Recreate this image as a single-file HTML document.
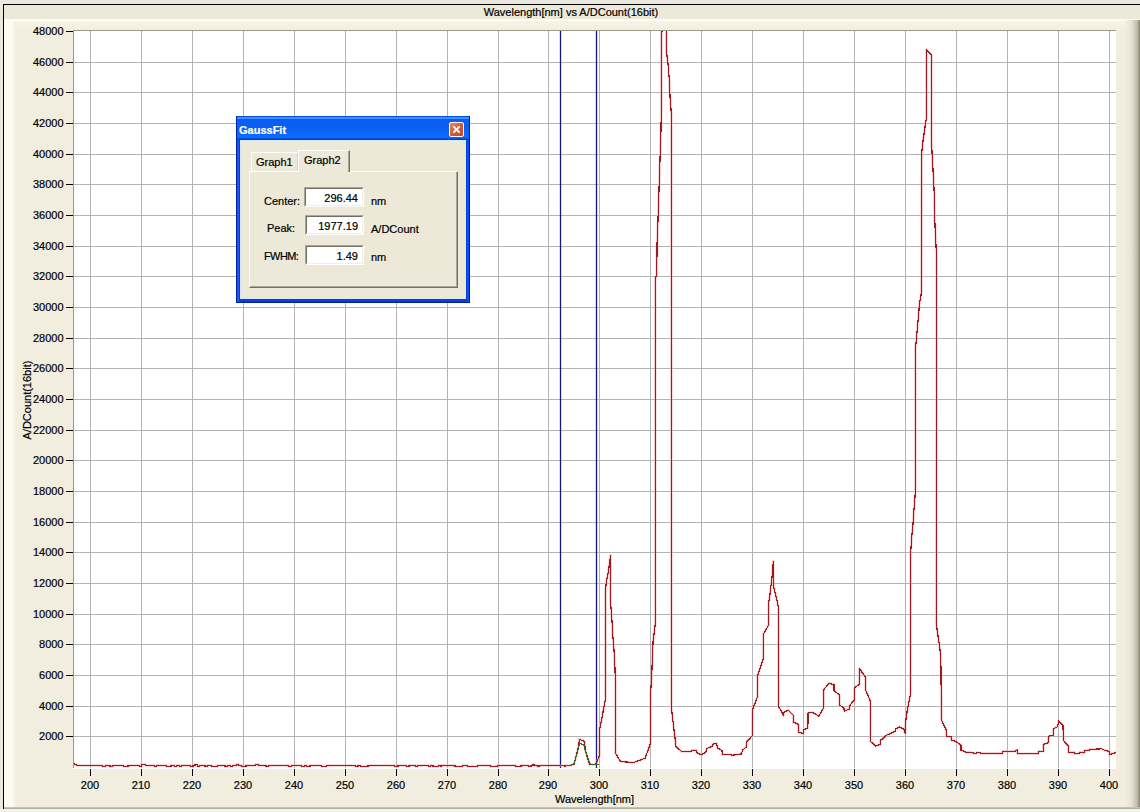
<!DOCTYPE html>
<html><head><meta charset="utf-8"><title>GaussFit</title>
<style>
html,body{margin:0;padding:0}
body{-webkit-text-stroke:0.2px currentColor;width:1140px;height:812px;overflow:hidden;position:relative;background:#EAE8DC;font-family:"Liberation Sans",sans-serif;font-size:11px;color:#000}
.a{position:absolute}
.t{position:absolute;white-space:nowrap;line-height:13px;font-size:11px}
.xl{position:absolute;top:779px;width:40px;text-align:center;line-height:13px;white-space:nowrap}
.yl{position:absolute;left:12.5px;width:51px;text-align:right;line-height:13px;white-space:nowrap}
#svg{position:absolute;left:0;top:0}
.dlg{position:absolute;left:236px;top:116px;width:234px;height:187px}
.edit{position:absolute;box-sizing:border-box;height:20px;background:#fff;border-top:1px solid #ACA899;border-left:1px solid #ACA899;border-right:1px solid #fff;border-bottom:1px solid #fff}
.edit .in{position:absolute;left:0;top:0;right:0;bottom:0;border-top:1px solid #716F64;border-left:1px solid #716F64;border-right:1px solid #F1EFE2;border-bottom:1px solid #F1EFE2}
.edit span{position:absolute;right:5px;top:4px;line-height:13px}
</style></head><body>
<!-- frame -->
<div class="a" style="left:3px;top:4px;width:1137px;height:1px;background:#000"></div>
<div class="a" style="left:3px;top:4px;width:1px;height:805px;background:#000"></div>
<div class="a" style="left:4px;top:5px;width:1136px;height:14px;background:#ECE9D8"></div>
<div class="a" style="left:4px;top:19px;width:1136px;height:2px;background:#FCFCF2"></div>
<div class="a" style="left:4px;top:21px;width:1136px;height:786px;background:#F1EEDF"></div>
<div class="a" style="left:4px;top:21px;width:12px;height:786px;background:linear-gradient(to right,#FEFEF4,#FBFAEE 70%,#F1EEDF)"></div>
<div class="a" style="left:16px;top:21px;width:1112px;height:10px;background:linear-gradient(to bottom,#F6F4E6,#F1EEDF)"></div>
<div class="a" style="left:1126px;top:20px;width:14px;height:789px;background:linear-gradient(to right,#F1EEDF,#E4E1D0 40%,#BEBBAA 80%,#858271)"></div>
<div class="a" style="left:4px;top:807px;width:1136px;height:2px;background:linear-gradient(to bottom,#CFCCBD,#A9A696)"></div>
<div class="a" style="left:0;top:809px;width:1140px;height:3px;background:#F2F1EA"></div>
<!-- plot -->
<div class="a" style="left:73px;top:30px;width:1043px;height:739px;background:#fff"></div>
<svg id="svg" width="1140" height="812" viewBox="0 0 1140 812">
<defs><clipPath id="pc"><rect x="74" y="31" width="1042" height="737"/></clipPath></defs>
<g stroke="#B3B3B3" stroke-width="1" shape-rendering="crispEdges">
<line x1="90.5" y1="31" x2="90.5" y2="768" />
<line x1="141.5" y1="31" x2="141.5" y2="768" />
<line x1="192.5" y1="31" x2="192.5" y2="768" />
<line x1="243.5" y1="31" x2="243.5" y2="768" />
<line x1="294.5" y1="31" x2="294.5" y2="768" />
<line x1="345.5" y1="31" x2="345.5" y2="768" />
<line x1="396.5" y1="31" x2="396.5" y2="768" />
<line x1="447.5" y1="31" x2="447.5" y2="768" />
<line x1="498.5" y1="31" x2="498.5" y2="768" />
<line x1="548.5" y1="31" x2="548.5" y2="768" />
<line x1="599.5" y1="31" x2="599.5" y2="768" />
<line x1="650.5" y1="31" x2="650.5" y2="768" />
<line x1="701.5" y1="31" x2="701.5" y2="768" />
<line x1="752.5" y1="31" x2="752.5" y2="768" />
<line x1="803.5" y1="31" x2="803.5" y2="768" />
<line x1="854.5" y1="31" x2="854.5" y2="768" />
<line x1="905.5" y1="31" x2="905.5" y2="768" />
<line x1="956.5" y1="31" x2="956.5" y2="768" />
<line x1="1007.5" y1="31" x2="1007.5" y2="768" />
<line x1="1058.5" y1="31" x2="1058.5" y2="768" />
<line x1="1109.5" y1="31" x2="1109.5" y2="768" />
<line x1="74" y1="736.5" x2="1116" y2="736.5" />
<line x1="74" y1="706.5" x2="1116" y2="706.5" />
<line x1="74" y1="675.5" x2="1116" y2="675.5" />
<line x1="74" y1="644.5" x2="1116" y2="644.5" />
<line x1="74" y1="614.5" x2="1116" y2="614.5" />
<line x1="74" y1="583.5" x2="1116" y2="583.5" />
<line x1="74" y1="552.5" x2="1116" y2="552.5" />
<line x1="74" y1="522.5" x2="1116" y2="522.5" />
<line x1="74" y1="491.5" x2="1116" y2="491.5" />
<line x1="74" y1="460.5" x2="1116" y2="460.5" />
<line x1="74" y1="430.5" x2="1116" y2="430.5" />
<line x1="74" y1="399.5" x2="1116" y2="399.5" />
<line x1="74" y1="368.5" x2="1116" y2="368.5" />
<line x1="74" y1="338.5" x2="1116" y2="338.5" />
<line x1="74" y1="307.5" x2="1116" y2="307.5" />
<line x1="74" y1="276.5" x2="1116" y2="276.5" />
<line x1="74" y1="246.5" x2="1116" y2="246.5" />
<line x1="74" y1="215.5" x2="1116" y2="215.5" />
<line x1="74" y1="184.5" x2="1116" y2="184.5" />
<line x1="74" y1="154.5" x2="1116" y2="154.5" />
<line x1="74" y1="123.5" x2="1116" y2="123.5" />
<line x1="74" y1="92.5" x2="1116" y2="92.5" />
<line x1="74" y1="62.5" x2="1116" y2="62.5" />
</g>
<g stroke="#9C9888" stroke-width="1" shape-rendering="crispEdges">
<line x1="73" y1="30.5" x2="1116" y2="30.5"/>
<line x1="73.5" y1="30" x2="73.5" y2="768"/>
</g>
<g stroke="#000" stroke-width="1.2" shape-rendering="crispEdges">
<line x1="90.5" y1="769" x2="90.5" y2="776" />
<line x1="141.5" y1="769" x2="141.5" y2="776" />
<line x1="192.5" y1="769" x2="192.5" y2="776" />
<line x1="243.5" y1="769" x2="243.5" y2="776" />
<line x1="294.5" y1="769" x2="294.5" y2="776" />
<line x1="345.5" y1="769" x2="345.5" y2="776" />
<line x1="396.5" y1="769" x2="396.5" y2="776" />
<line x1="447.5" y1="769" x2="447.5" y2="776" />
<line x1="498.5" y1="769" x2="498.5" y2="776" />
<line x1="548.5" y1="769" x2="548.5" y2="776" />
<line x1="599.5" y1="769" x2="599.5" y2="776" />
<line x1="650.5" y1="769" x2="650.5" y2="776" />
<line x1="701.5" y1="769" x2="701.5" y2="776" />
<line x1="752.5" y1="769" x2="752.5" y2="776" />
<line x1="803.5" y1="769" x2="803.5" y2="776" />
<line x1="854.5" y1="769" x2="854.5" y2="776" />
<line x1="905.5" y1="769" x2="905.5" y2="776" />
<line x1="956.5" y1="769" x2="956.5" y2="776" />
<line x1="1007.5" y1="769" x2="1007.5" y2="776" />
<line x1="1058.5" y1="769" x2="1058.5" y2="776" />
<line x1="1109.5" y1="769" x2="1109.5" y2="776" />
<line x1="66" y1="736.5" x2="73" y2="736.5" />
<line x1="66" y1="706.5" x2="73" y2="706.5" />
<line x1="66" y1="675.5" x2="73" y2="675.5" />
<line x1="66" y1="644.5" x2="73" y2="644.5" />
<line x1="66" y1="614.5" x2="73" y2="614.5" />
<line x1="66" y1="583.5" x2="73" y2="583.5" />
<line x1="66" y1="552.5" x2="73" y2="552.5" />
<line x1="66" y1="522.5" x2="73" y2="522.5" />
<line x1="66" y1="491.5" x2="73" y2="491.5" />
<line x1="66" y1="460.5" x2="73" y2="460.5" />
<line x1="66" y1="430.5" x2="73" y2="430.5" />
<line x1="66" y1="399.5" x2="73" y2="399.5" />
<line x1="66" y1="368.5" x2="73" y2="368.5" />
<line x1="66" y1="338.5" x2="73" y2="338.5" />
<line x1="66" y1="307.5" x2="73" y2="307.5" />
<line x1="66" y1="276.5" x2="73" y2="276.5" />
<line x1="66" y1="246.5" x2="73" y2="246.5" />
<line x1="66" y1="215.5" x2="73" y2="215.5" />
<line x1="66" y1="184.5" x2="73" y2="184.5" />
<line x1="66" y1="154.5" x2="73" y2="154.5" />
<line x1="66" y1="123.5" x2="73" y2="123.5" />
<line x1="66" y1="92.5" x2="73" y2="92.5" />
<line x1="66" y1="62.5" x2="73" y2="62.5" />
<line x1="66" y1="31.5" x2="73" y2="31.5" />
</g>
<g clip-path="url(#pc)">
<line x1="560.5" y1="31" x2="560.5" y2="768" stroke="#141482" stroke-width="1.3"/>
<line x1="596.5" y1="31" x2="596.5" y2="768" stroke="#141482" stroke-width="1.3"/>
<polyline fill="none" stroke="#F0A8A8" stroke-opacity="0.6" stroke-width="2.6" stroke-linejoin="round" points="73.5,763.5 75.5,764.5 77.9,765.5 77.9,765.5 102.6,765.5 102.6,766.5 105.8,766.5 105.8,765.5 110.0,765.5 110.0,766.5 112.6,766.5 112.6,765.5 123.2,765.5 123.2,766.5 127.9,766.5 127.9,765.5 139.5,765.5 139.5,766.5 141.6,766.5 141.6,764.5 145.8,764.5 145.8,765.5 154.2,765.5 154.2,766.5 156.8,766.5 156.8,765.5 166.3,765.5 166.3,766.5 171.0,766.5 171.0,765.5 174.2,765.5 174.2,766.5 176.3,766.5 176.3,765.5 179.5,765.5 179.5,766.5 181.6,766.5 181.6,765.5 190.3,765.5 190.3,766.5 192.9,766.5 192.9,765.5 195.0,765.5 195.0,764.5 197.6,764.5 197.6,766.5 199.7,766.5 199.7,765.5 205.0,765.5 205.0,766.5 207.6,766.5 207.6,765.5 211.8,765.5 211.8,766.5 217.1,766.5 217.1,765.5 225.0,765.5 225.0,766.5 227.6,766.5 227.6,765.5 230.3,765.5 230.3,766.5 232.4,766.5 232.4,765.5 236.6,765.5 236.6,764.5 238.7,764.5 238.7,765.5 241.8,765.5 241.8,766.5 246.0,766.5 246.0,765.5 255.5,765.5 255.5,764.5 258.7,764.5 258.7,765.5 266.0,765.5 266.0,766.5 268.7,766.5 268.7,765.5 288.2,765.5 288.2,766.5 291.3,766.5 291.3,765.5 301.8,765.5 301.8,766.5 304.7,766.5 304.7,765.5 306.3,765.5 306.3,766.5 310.0,766.5 310.0,765.5 321.6,765.5 321.6,766.5 326.8,766.5 326.8,765.5 355.3,765.5 355.3,766.5 357.9,766.5 357.9,765.5 360.5,765.5 360.5,766.5 367.9,766.5 367.9,765.5 394.7,765.5 394.7,766.5 397.9,766.5 397.9,765.5 406.3,765.5 406.3,766.5 409.0,766.5 409.0,765.5 415.8,765.5 415.8,766.5 417.6,766.5 417.6,765.5 428.7,765.5 428.7,766.5 430.8,766.5 430.8,765.5 432.9,765.5 432.9,766.5 438.2,766.5 438.2,765.5 440.8,765.5 440.8,766.5 441.8,766.5 441.8,765.5 455.0,765.5 455.0,766.5 462.4,766.5 462.4,765.5 467.1,765.5 467.1,766.5 477.6,766.5 477.6,765.5 490.3,765.5 490.3,766.5 497.1,766.5 497.1,765.5 515.8,765.5 515.8,766.5 521.0,766.5 521.0,765.5 528.1,765.5 528.1,766.5 530.9,766.5 530.9,765.5 533.0,765.5 533.0,764.5 534.7,764.5 534.7,765.5 537.2,765.5 537.2,766.5 539.0,766.5 539.0,765.5 564.6,765.5 564.6,766.5 565.5,766.5 565.5,765.5 569.5,765.5 570.2,765.5 574.2,764.0 578.6,746.0 579.4,739.4 584.6,741.3 585.2,750.0 589.5,764.4 595.5,764.5 599.5,755.7 599.5,730.5 605.5,699.0 605.5,589.0 606.5,581.0 608.0,574.0 609.0,567.0 610.0,560.0 610.6,555.4 610.4,600.0 612.0,621.0 612.9,636.6 614.2,653.0 615.0,669.0 615.5,685.0 615.5,753.3 620.5,761.5 633.3,762.6 645.2,758.2 650.5,743.2 650.5,693.3 651.5,680.0 653.1,641.0 655.3,623.6 655.3,277.2 656.8,276.0 657.0,245.0 658.0,220.0 659.0,190.0 660.0,160.0 661.0,130.0 661.3,110.0 661.3,35.0 664.0,20.0 666.4,20.0 666.4,51.6 668.3,66.0 669.4,81.6 670.0,96.0 671.4,115.0 671.4,708.0 676.0,746.5 681.6,751.5 691.0,751.5 692.0,750.3 696.0,750.3 696.9,752.6 701.3,754.8 705.8,752.0 706.7,748.6 712.2,746.2 713.2,744.2 716.6,743.2 717.6,748.1 722.0,750.6 722.3,754.5 729.9,754.5 732.4,755.2 741.2,754.0 742.7,750.1 746.2,747.0 747.1,741.2 752.3,735.8 752.5,709.7 757.5,696.9 757.5,676.0 763.1,659.4 763.1,634.4 768.6,625.2 768.6,603.0 769.8,595.7 771.3,583.1 772.2,575.7 773.3,561.3 773.5,586.0 775.0,592.0 776.4,597.9 778.5,607.5 778.5,706.3 782.8,713.7 783.3,716.0 783.5,712.7 788.2,710.2 793.2,715.2 793.2,722.0 798.6,724.5 798.6,732.4 803.0,733.4 804.0,729.5 807.9,728.0 808.0,713.2 812.4,712.2 818.8,716.2 823.7,707.8 823.7,689.6 829.1,683.2 834.0,684.6 834.0,690.5 839.5,695.0 839.5,704.8 843.9,708.3 844.4,711.0 849.4,709.0 849.5,706.0 854.3,699.8 854.3,688.0 859.2,684.6 859.2,668.3 865.6,677.2 865.6,690.0 870.5,701.3 870.4,741.4 875.8,746.1 880.2,744.3 880.2,740.4 884.6,737.4 886.0,735.5 890.5,733.5 895.0,731.5 896.0,728.6 899.4,727.1 903.8,729.0 905.3,733.5 905.4,723.6 907.3,709.9 909.3,700.0 910.5,694.0 910.7,552.4 911.6,538.6 912.9,525.6 914.0,509.0 915.3,493.3 915.3,347.4 916.2,342.0 917.5,326.0 918.6,315.0 919.4,304.0 921.4,292.9 921.8,152.5 922.7,143.3 924.9,127.6 926.4,118.2 926.4,49.4 931.5,55.3 931.4,141.4 932.9,167.3 934.2,193.1 934.7,219.0 936.0,245.8 936.6,255.0 936.6,405.0 936.2,623.5 939.3,644.8 940.8,655.8 941.5,719.9 946.3,730.2 946.3,736.2 951.2,737.0 951.2,740.1 956.1,741.6 961.0,745.0 961.0,750.1 966.5,752.4 971.4,752.4 975.3,753.4 977.8,752.4 982.2,753.4 1002.4,753.4 1002.5,751.2 1014.8,751.2 1017.2,750.2 1017.2,753.7 1038.4,753.7 1038.4,751.2 1043.3,751.2 1043.3,744.3 1048.3,742.9 1048.3,736.5 1053.2,735.0 1053.2,729.1 1057.6,726.6 1058.6,721.2 1063.0,725.1 1063.4,740.4 1068.6,746.3 1068.6,752.4 1074.5,752.4 1074.5,753.7 1079.4,753.7 1079.4,752.4 1084.6,752.4 1084.6,750.3 1089.6,750.3 1089.6,749.3 1099.4,749.0 1100.7,748.4 1104.0,750.0 1109.3,751.5 1109.5,754.6 1114.2,753.0 1116.0,752.5"/>
<polyline fill="none" shape-rendering="crispEdges" stroke="#9E1A20" stroke-width="1.2" stroke-linejoin="miter" points="73.5,763.5 75.5,764.5 77.9,765.5 77.9,765.5 102.6,765.5 102.6,766.5 105.8,766.5 105.8,765.5 110.0,765.5 110.0,766.5 112.6,766.5 112.6,765.5 123.2,765.5 123.2,766.5 127.9,766.5 127.9,765.5 139.5,765.5 139.5,766.5 141.6,766.5 141.6,764.5 145.8,764.5 145.8,765.5 154.2,765.5 154.2,766.5 156.8,766.5 156.8,765.5 166.3,765.5 166.3,766.5 171.0,766.5 171.0,765.5 174.2,765.5 174.2,766.5 176.3,766.5 176.3,765.5 179.5,765.5 179.5,766.5 181.6,766.5 181.6,765.5 190.3,765.5 190.3,766.5 192.9,766.5 192.9,765.5 195.0,765.5 195.0,764.5 197.6,764.5 197.6,766.5 199.7,766.5 199.7,765.5 205.0,765.5 205.0,766.5 207.6,766.5 207.6,765.5 211.8,765.5 211.8,766.5 217.1,766.5 217.1,765.5 225.0,765.5 225.0,766.5 227.6,766.5 227.6,765.5 230.3,765.5 230.3,766.5 232.4,766.5 232.4,765.5 236.6,765.5 236.6,764.5 238.7,764.5 238.7,765.5 241.8,765.5 241.8,766.5 246.0,766.5 246.0,765.5 255.5,765.5 255.5,764.5 258.7,764.5 258.7,765.5 266.0,765.5 266.0,766.5 268.7,766.5 268.7,765.5 288.2,765.5 288.2,766.5 291.3,766.5 291.3,765.5 301.8,765.5 301.8,766.5 304.7,766.5 304.7,765.5 306.3,765.5 306.3,766.5 310.0,766.5 310.0,765.5 321.6,765.5 321.6,766.5 326.8,766.5 326.8,765.5 355.3,765.5 355.3,766.5 357.9,766.5 357.9,765.5 360.5,765.5 360.5,766.5 367.9,766.5 367.9,765.5 394.7,765.5 394.7,766.5 397.9,766.5 397.9,765.5 406.3,765.5 406.3,766.5 409.0,766.5 409.0,765.5 415.8,765.5 415.8,766.5 417.6,766.5 417.6,765.5 428.7,765.5 428.7,766.5 430.8,766.5 430.8,765.5 432.9,765.5 432.9,766.5 438.2,766.5 438.2,765.5 440.8,765.5 440.8,766.5 441.8,766.5 441.8,765.5 455.0,765.5 455.0,766.5 462.4,766.5 462.4,765.5 467.1,765.5 467.1,766.5 477.6,766.5 477.6,765.5 490.3,765.5 490.3,766.5 497.1,766.5 497.1,765.5 515.8,765.5 515.8,766.5 521.0,766.5 521.0,765.5 528.1,765.5 528.1,766.5 530.9,766.5 530.9,765.5 533.0,765.5 533.0,764.5 534.7,764.5 534.7,765.5 537.2,765.5 537.2,766.5 539.0,766.5 539.0,765.5 564.6,765.5 564.6,766.5 565.5,766.5 565.5,765.5 569.5,765.5 570.2,765.5 574.2,764.0 578.6,746.0 579.4,739.4 584.6,741.3 585.2,750.0 589.5,764.4 595.5,764.5 599.5,755.7 599.5,730.5 605.5,699.0 605.5,589.0 606.5,581.0 608.0,574.0 609.0,567.0 610.0,560.0 610.6,555.4 610.4,600.0 612.0,621.0 612.9,636.6 614.2,653.0 615.0,669.0 615.5,685.0 615.5,753.3 620.5,761.5 633.3,762.6 645.2,758.2 650.5,743.2 650.5,693.3 651.5,680.0 653.1,641.0 655.3,623.6 655.3,277.2 656.8,276.0 657.0,245.0 658.0,220.0 659.0,190.0 660.0,160.0 661.0,130.0 661.3,110.0 661.3,35.0 664.0,20.0 666.4,20.0 666.4,51.6 668.3,66.0 669.4,81.6 670.0,96.0 671.4,115.0 671.4,708.0 676.0,746.5 681.6,751.5 691.0,751.5 692.0,750.3 696.0,750.3 696.9,752.6 701.3,754.8 705.8,752.0 706.7,748.6 712.2,746.2 713.2,744.2 716.6,743.2 717.6,748.1 722.0,750.6 722.3,754.5 729.9,754.5 732.4,755.2 741.2,754.0 742.7,750.1 746.2,747.0 747.1,741.2 752.3,735.8 752.5,709.7 757.5,696.9 757.5,676.0 763.1,659.4 763.1,634.4 768.6,625.2 768.6,603.0 769.8,595.7 771.3,583.1 772.2,575.7 773.3,561.3 773.5,586.0 775.0,592.0 776.4,597.9 778.5,607.5 778.5,706.3 782.8,713.7 783.3,716.0 783.5,712.7 788.2,710.2 793.2,715.2 793.2,722.0 798.6,724.5 798.6,732.4 803.0,733.4 804.0,729.5 807.9,728.0 808.0,713.2 812.4,712.2 818.8,716.2 823.7,707.8 823.7,689.6 829.1,683.2 834.0,684.6 834.0,690.5 839.5,695.0 839.5,704.8 843.9,708.3 844.4,711.0 849.4,709.0 849.5,706.0 854.3,699.8 854.3,688.0 859.2,684.6 859.2,668.3 865.6,677.2 865.6,690.0 870.5,701.3 870.4,741.4 875.8,746.1 880.2,744.3 880.2,740.4 884.6,737.4 886.0,735.5 890.5,733.5 895.0,731.5 896.0,728.6 899.4,727.1 903.8,729.0 905.3,733.5 905.4,723.6 907.3,709.9 909.3,700.0 910.5,694.0 910.7,552.4 911.6,538.6 912.9,525.6 914.0,509.0 915.3,493.3 915.3,347.4 916.2,342.0 917.5,326.0 918.6,315.0 919.4,304.0 921.4,292.9 921.8,152.5 922.7,143.3 924.9,127.6 926.4,118.2 926.4,49.4 931.5,55.3 931.4,141.4 932.9,167.3 934.2,193.1 934.7,219.0 936.0,245.8 936.6,255.0 936.6,405.0 936.2,623.5 939.3,644.8 940.8,655.8 941.5,719.9 946.3,730.2 946.3,736.2 951.2,737.0 951.2,740.1 956.1,741.6 961.0,745.0 961.0,750.1 966.5,752.4 971.4,752.4 975.3,753.4 977.8,752.4 982.2,753.4 1002.4,753.4 1002.5,751.2 1014.8,751.2 1017.2,750.2 1017.2,753.7 1038.4,753.7 1038.4,751.2 1043.3,751.2 1043.3,744.3 1048.3,742.9 1048.3,736.5 1053.2,735.0 1053.2,729.1 1057.6,726.6 1058.6,721.2 1063.0,725.1 1063.4,740.4 1068.6,746.3 1068.6,752.4 1074.5,752.4 1074.5,753.7 1079.4,753.7 1079.4,752.4 1084.6,752.4 1084.6,750.3 1089.6,750.3 1089.6,749.3 1099.4,749.0 1100.7,748.4 1104.0,750.0 1109.3,751.5 1109.5,754.6 1114.2,753.0 1116.0,752.5"/>
<polyline fill="none" shape-rendering="crispEdges" stroke="#2E6B22" stroke-width="1.25" points="560.5,765.3 570.0,765.6 574.0,764.0 577.5,751.5 579.7,743.1 583.7,744.8 589.0,761.9 591.0,764.5 599.0,764.5"/>
</g>
</svg>
<div class="xl" style="left:70px">200</div>
<div class="xl" style="left:121px">210</div>
<div class="xl" style="left:172px">220</div>
<div class="xl" style="left:223px">230</div>
<div class="xl" style="left:274px">240</div>
<div class="xl" style="left:325px">250</div>
<div class="xl" style="left:376px">260</div>
<div class="xl" style="left:427px">270</div>
<div class="xl" style="left:478px">280</div>
<div class="xl" style="left:528px">290</div>
<div class="xl" style="left:579px">300</div>
<div class="xl" style="left:630px">310</div>
<div class="xl" style="left:681px">320</div>
<div class="xl" style="left:732px">330</div>
<div class="xl" style="left:783px">340</div>
<div class="xl" style="left:834px">350</div>
<div class="xl" style="left:885px">360</div>
<div class="xl" style="left:936px">370</div>
<div class="xl" style="left:987px">380</div>
<div class="xl" style="left:1038px">390</div>
<div class="xl" style="left:1089px">400</div>
<div class="yl" style="top:730px">2000</div>
<div class="yl" style="top:700px">4000</div>
<div class="yl" style="top:669px">6000</div>
<div class="yl" style="top:638px">8000</div>
<div class="yl" style="top:608px">10000</div>
<div class="yl" style="top:577px">12000</div>
<div class="yl" style="top:546px">14000</div>
<div class="yl" style="top:516px">16000</div>
<div class="yl" style="top:485px">18000</div>
<div class="yl" style="top:454px">20000</div>
<div class="yl" style="top:424px">22000</div>
<div class="yl" style="top:393px">24000</div>
<div class="yl" style="top:362px">26000</div>
<div class="yl" style="top:332px">28000</div>
<div class="yl" style="top:301px">30000</div>
<div class="yl" style="top:270px">32000</div>
<div class="yl" style="top:240px">34000</div>
<div class="yl" style="top:209px">36000</div>
<div class="yl" style="top:178px">38000</div>
<div class="yl" style="top:148px">40000</div>
<div class="yl" style="top:117px">42000</div>
<div class="yl" style="top:86px">44000</div>
<div class="yl" style="top:56px">46000</div>
<div class="yl" style="top:25px">48000</div>
<div class="t" style="left:0;top:6px;width:1142px;text-align:center">Wavelength[nm] vs A/DCount(16bit)</div>
<div class="t" style="left:555px;top:793px">Wavelength[nm]</div>
<div class="t" style="left:-11px;top:395px;width:76px;text-align:center;transform:rotate(-90deg);transform-origin:50% 50%">A/DCount(16bit)</div>

<!-- dialog -->
<div class="dlg">
  <div class="a" style="left:0;top:0;width:234px;height:187px;background:#0A3ED8"></div>
  <div class="a" style="left:0;top:0;width:1px;height:187px;background:#0020A8"></div>
  <div class="a" style="left:233px;top:0;width:1px;height:187px;background:#0018A0"></div>
  <div class="a" style="left:0;top:186px;width:234px;height:1px;background:#001A90"></div>
  <div class="a" style="left:1px;top:0;width:232px;height:24px;background:linear-gradient(to bottom,#0B4FD8 0,#0B4FD8 1px,#3D8DFF 1px,#3D8DFF 3px,#0A5DF2 3px,#0A60F5 12px,#0A6CFF 20px,#0A66FA 22px,#0040C8 23px,#0040C8 24px)"></div>
  <div class="a" style="left:1px;top:24px;width:2px;height:162px;background:#1C55F2"></div>
  <div class="a" style="left:3px;top:24px;width:1px;height:162px;background:#0842C8"></div>
  <div class="a" style="left:230px;top:24px;width:1px;height:162px;background:#0842D0"></div>
  <div class="a" style="left:231px;top:24px;width:2px;height:162px;background:#0A50F4"></div>
  <div class="a" style="left:4px;top:24px;width:226px;height:159px;background:#ECE9D8;box-shadow:inset 1px 1px 0 #DCE6F6, inset -1px -1px 0 #DCE6F6"></div>
  <div class="t" style="left:3px;top:8px;color:#fff;font-weight:bold;font-size:11px">GaussFit</div>
  <!-- close -->
  <div class="a" style="left:213px;top:6px;width:15px;height:15px;box-sizing:border-box;border:1px solid #fff;border-radius:2px;background:linear-gradient(135deg,#EC8466,#D85A34 50%,#C8461E)"></div>
  <svg class="a" style="left:213px;top:6px" width="15" height="15" viewBox="0 0 15 15"><path d="M4.4 4.4 L10.6 10.6 M10.6 4.4 L4.4 10.6" stroke="#fff" stroke-width="2" stroke-linecap="butt"/></svg>
  <!-- tabs -->
  <div class="a" style="left:13px;top:55px;width:209px;height:117px;box-sizing:border-box;background:#ECE9D8;border-left:1px solid #fff;border-top:1px solid #fff;border-right:1px solid #716F64;border-bottom:1px solid #716F64;box-shadow:inset -1px -1px 0 #ACA899"></div>
  <div class="a" style="left:15px;top:36px;width:47px;height:19px;box-sizing:border-box;background:#ECE9D8;border-left:1px solid #fff;border-top:1px solid #fff;border-right:1px solid #D8D4C4"></div>
  <div class="a" style="left:62px;top:34px;width:52px;height:22px;box-sizing:border-box;background:#ECE9D8;border-left:1px solid #fff;border-top:1px solid #fff;border-right:1px solid #716F64;box-shadow:inset -1px 0 0 #ACA899"></div>
  <div class="t" style="left:20px;top:40px">Graph1</div>
  <div class="t" style="left:68px;top:38px">Graph2</div>
  <!-- fields -->
  <div class="t" style="left:28px;top:79px">Center:</div>
  <div class="t" style="left:31px;top:106px">Peak:</div>
  <div class="t" style="left:28px;top:134px;letter-spacing:-0.6px">FWHM:</div>
  <div class="edit" style="left:68px;top:71px;width:60px"><div class="in"></div><span>296.44</span></div>
  <div class="edit" style="left:69px;top:99px;width:59px"><div class="in"></div><span>1977.19</span></div>
  <div class="edit" style="left:69px;top:129px;width:59px"><div class="in"></div><span>1.49</span></div>
  <div class="t" style="left:135px;top:79px">nm</div>
  <div class="t" style="left:135px;top:107px">A/DCount</div>
  <div class="t" style="left:135px;top:135px">nm</div>
</div>
</body></html>
